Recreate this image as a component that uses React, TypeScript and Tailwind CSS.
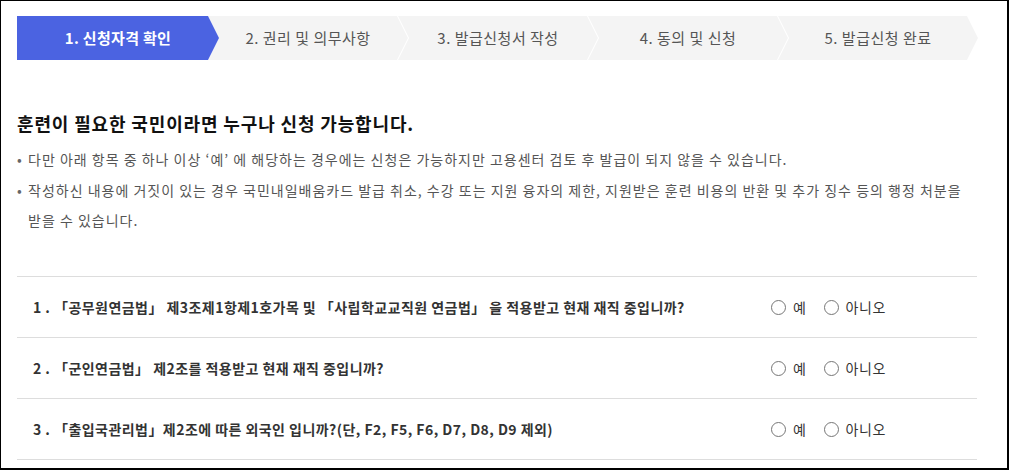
import React from "react";

const steps = [
  "1. 신청자격 확인",
  "2. 권리 및 의무사항",
  "3. 발급신청서 작성",
  "4. 동의 및 신청",
  "5. 발급신청 완료",
];

const questions = [
  "1 . 「공무원연금법」 제3조제1항제1호가목 및 「사립학교교직원 연금법」 을 적용받고 현재 재직 중입니까?",
  "2 . 「군인연금법」 제2조를 적용받고 현재 재직 중입니까?",
  "3 . 「출입국관리법」제2조에 따른 외국인 입니까?(단, F2, F5, F6, D7, D8, D9 제외)",
];

const firstClip = "[clip-path:polygon(0_0,calc(100%-11px)_0,100%_50%,calc(100%-11px)_100%,0_100%)]";
const restClip =
  "[clip-path:polygon(0_0,calc(100%-11px)_0,100%_50%,calc(100%-11px)_100%,0_100%,11px_50%)]";

const Radio: React.FC<{ label: string }> = ({ label }) => (
  <label className="flex items-center gap-[7px]">
    <span className="w-[15px] h-[15px] rounded-full border border-[#767676] bg-white" />
    <span>{label}</span>
  </label>
);

export default function App() {
  return (
    <div
      className="w-[1009px] h-[470px] overflow-hidden bg-white border-l border-t border-r-2 border-b-2 border-black px-4 pt-[15px]"
      style={{ fontFamily: '"Noto Sans CJK KR", "Noto Sans", sans-serif' }}
    >
      {/* steps */}
      <div className="flex h-[44px] w-[961px]">
        {steps.map((s, i) => (
          <div
            key={s}
            className={
              i === 0
                ? `relative w-[202px] shrink-0 flex items-center justify-center bg-[#4b63e1] text-white font-bold text-[15px] tracking-[0.3px] ${firstClip}`
                : `relative w-[200px] shrink-0 flex items-center justify-center bg-[#f4f4f4] text-[#555] text-[15px] tracking-[0.5px] ${
                    i === 1 ? "-ml-[11px]" : "-ml-[10px]"
                  } ${restClip}`
            }
            style={{ zIndex: 5 - i }}
          >
            {s}
          </div>
        ))}
      </div>

      <h2 className="mt-[50px] text-[18px] leading-[26px] font-bold text-[#111] tracking-[0.85px]">
        훈련이 필요한 국민이라면 누구나 신청 가능합니다.
      </h2>

      <ul className="mt-[8px] w-[961px] flex flex-col gap-[1px] text-[14px] leading-[30px] text-[#555] tracking-[1px]">
        <li className="flex">
          <span className="w-[11px] shrink-0 text-[#666] tracking-normal">•</span>
          <span>
            다만 아래 항목 중 하나 이상 ‘예’ 에 해당하는 경우에는 신청은 가능하지만 고용센터 검토 후 발급이 되지 않을 수
            있습니다.
          </span>
        </li>
        <li className="flex">
          <span className="w-[11px] shrink-0 text-[#666] tracking-normal">•</span>
          <span>
            작성하신 내용에 거짓이 있는 경우 국민내일배움카드 발급 취소, 수강 또는 지원 융자의 제한, 지원받은 훈련 비용의 반환
            및 추가 징수 등의 행정 처분을 받을 수 있습니다.
          </span>
        </li>
      </ul>

      <div className="mt-[41px] w-[960px] border-b border-[#dddddd]">
        {questions.map((q) => (
          <div
            key={q}
            className="h-[61px] border-t border-[#dddddd] flex items-center justify-between pl-4 pr-[91px]"
          >
            <span className="text-[14px] font-semibold text-[#333] tracking-[0.45px]">{q}</span>
            <div className="flex items-center gap-[17px] text-[14px] text-[#333] tracking-[0.6px]">
              <Radio label="예" />
              <Radio label="아니오" />
            </div>
          </div>
        ))}
      </div>
    </div>
  );
}
